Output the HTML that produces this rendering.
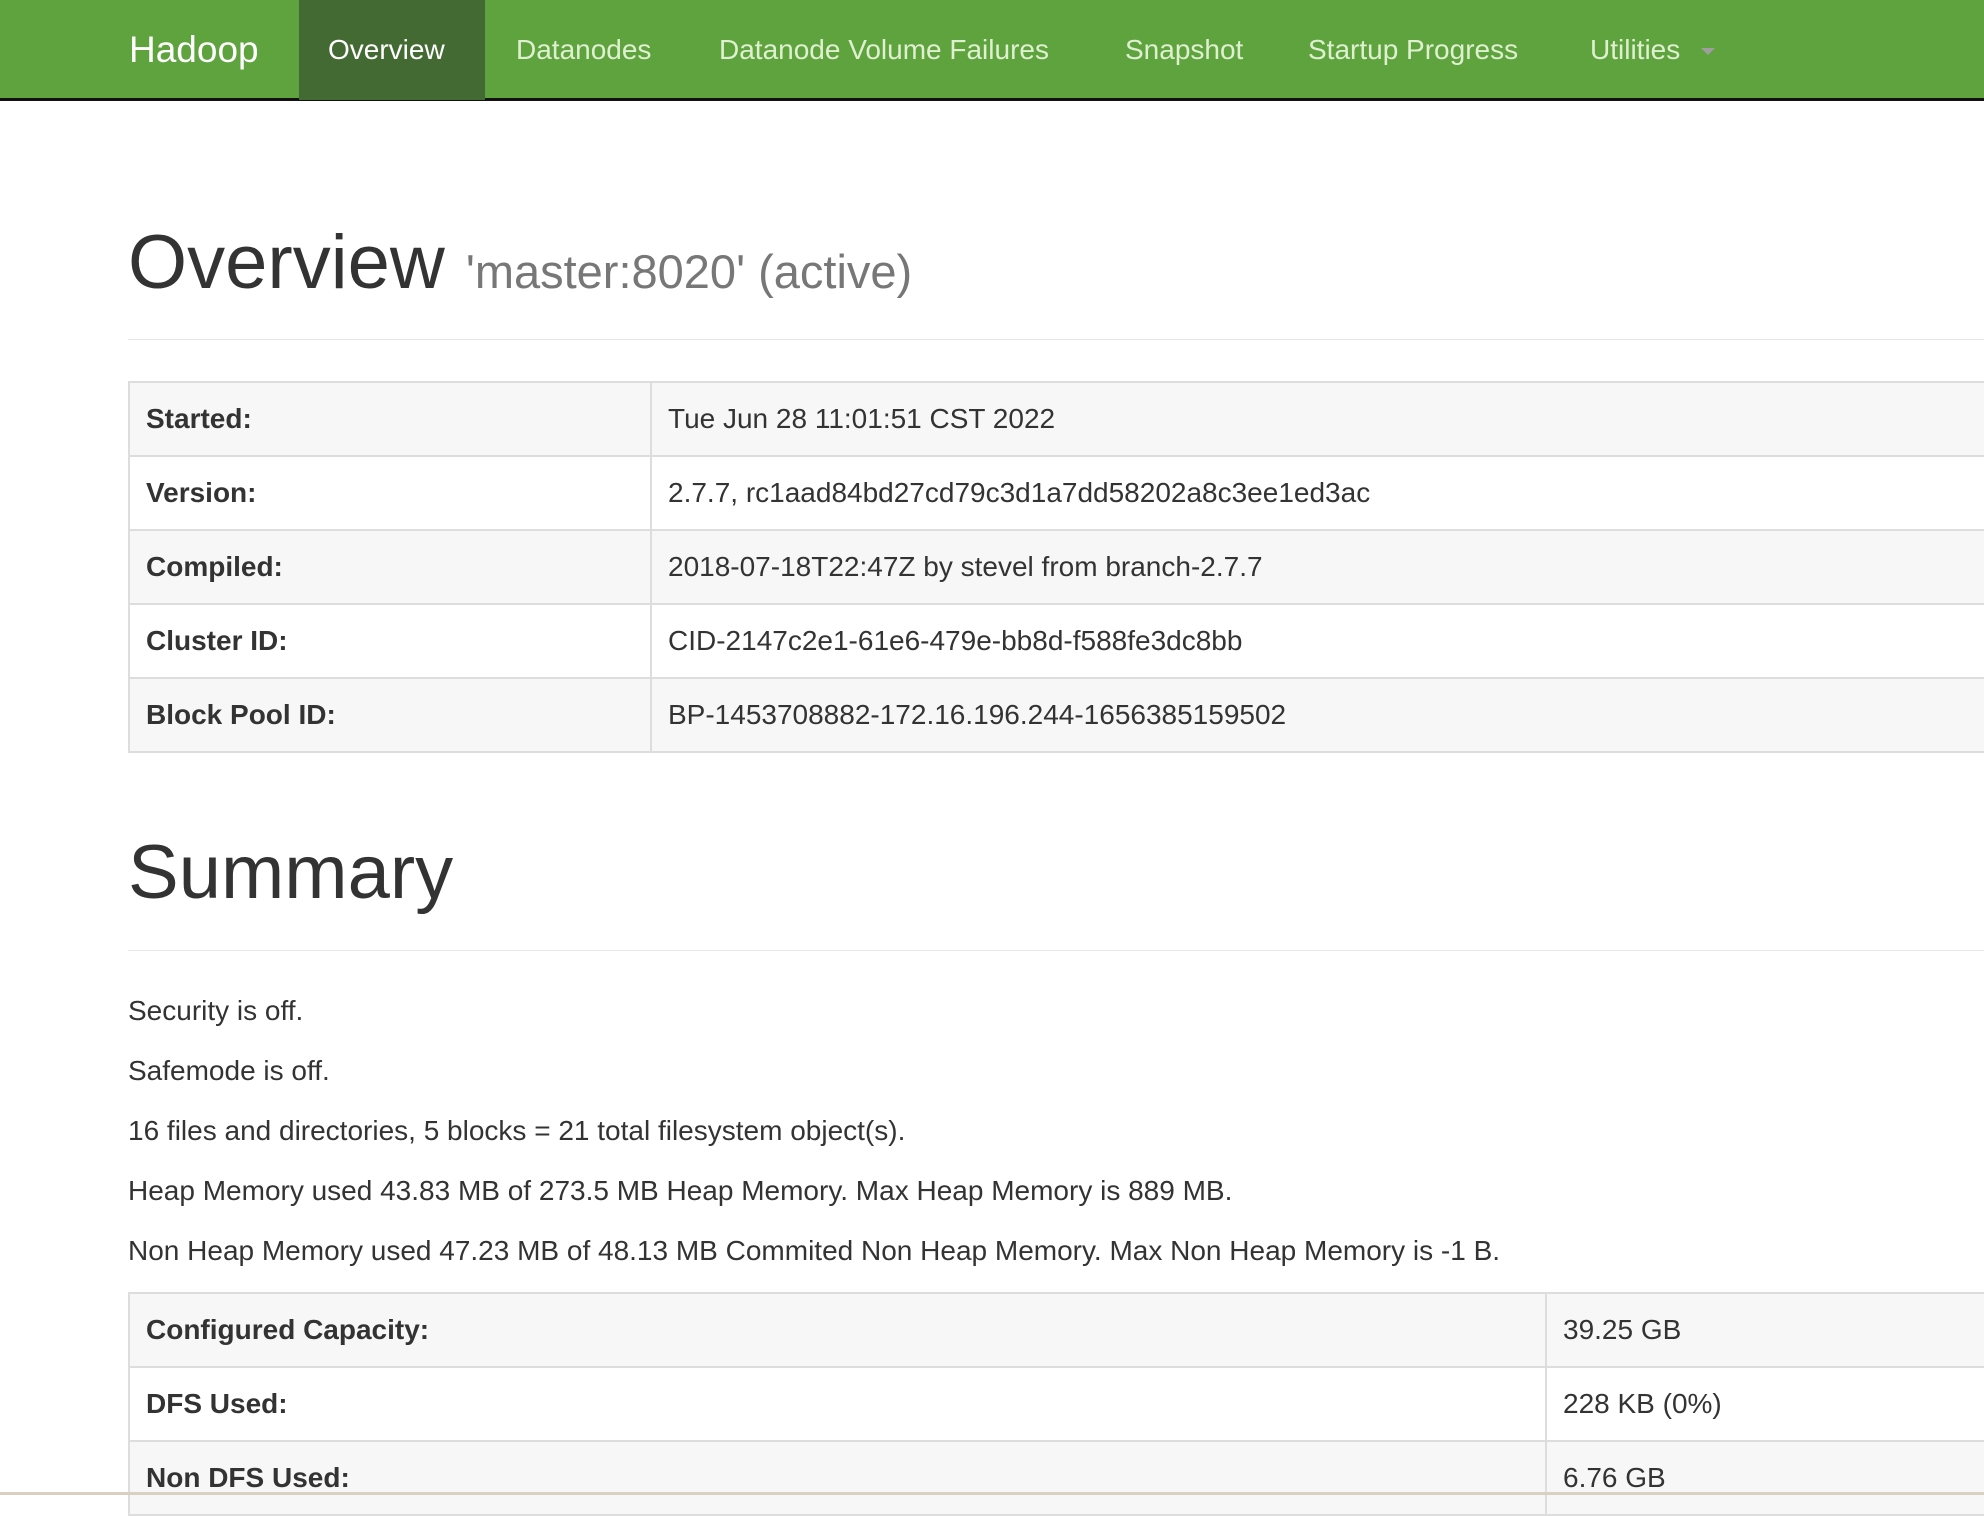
<!DOCTYPE html>
<html><head><meta charset="utf-8"><style>
*{margin:0;padding:0;box-sizing:border-box}
body{width:1984px;height:1495px;overflow:hidden;background:#fff;font-family:"Liberation Sans",sans-serif;color:#333;position:relative}
.nav{position:absolute;left:0;top:0;width:1984px;height:101px;background:#5fa33e;border-bottom:3px solid #111}
.nav span{position:absolute;top:0;line-height:100px;font-size:28px;color:#dff0d0;white-space:nowrap}
.nav .brand{font-size:37px;color:#fff}
.nav .act{background:#446a34;color:#fff;left:299px;width:186px;height:100px;padding-left:29px}
.caret{position:absolute;left:1701px;top:48px;width:0;height:0;border-left:7px solid transparent;border-right:7px solid transparent;border-top:7px solid #9e9e9e}
.abs{position:absolute;white-space:nowrap}
hr{position:absolute;left:128px;width:1856px;border:0;border-top:1px solid #e6e6e6}
table{position:absolute;left:128px;border-collapse:collapse;font-size:28px}
td{border:2px solid #ddd;height:74px;padding:0 16px;vertical-align:middle}
tr:nth-child(odd) td{background:#f7f7f7}
td.k{font-weight:bold}
p.l{position:absolute;left:128px;font-size:28px;white-space:nowrap}
.bot{position:absolute;left:0;top:1492px;width:1984px;height:3px;background:#d8d0c0}
</style></head><body>
<div class="nav">
<span class="brand" style="left:129px">Hadoop</span>
<span class="act">Overview</span>
<span style="left:516px">Datanodes</span>
<span style="left:719px">Datanode Volume Failures</span>
<span style="left:1125px">Snapshot</span>
<span style="left:1308px">Startup Progress</span>
<span style="left:1590px">Utilities</span>
<div class="caret"></div>
</div>
<div class="abs" style="left:128px;top:218px;font-size:76px;line-height:90px;color:#333">Overview <span style="font-size:47px;color:#777">'master:8020' (active)</span></div>
<hr style="top:339px">
<table style="top:381px;width:1900px">
<tr><td class="k" style="width:522px">Started:</td><td>Tue Jun 28 11:01:51 CST 2022</td></tr>
<tr><td class="k">Version:</td><td>2.7.7, rc1aad84bd27cd79c3d1a7dd58202a8c3ee1ed3ac</td></tr>
<tr><td class="k">Compiled:</td><td>2018-07-18T22:47Z by stevel from branch-2.7.7</td></tr>
<tr><td class="k">Cluster ID:</td><td>CID-2147c2e1-61e6-479e-bb8d-f588fe3dc8bb</td></tr>
<tr><td class="k">Block Pool ID:</td><td>BP-1453708882-172.16.196.244-1656385159502</td></tr>
</table>
<div class="abs" style="left:128px;top:828px;font-size:76px;line-height:90px">Summary</div>
<hr style="top:950px">
<p class="l" style="top:995px">Security is off.</p>
<p class="l" style="top:1055px">Safemode is off.</p>
<p class="l" style="top:1115px">16 files and directories, 5 blocks = 21 total filesystem object(s).</p>
<p class="l" style="top:1175px">Heap Memory used 43.83 MB of 273.5 MB Heap Memory. Max Heap Memory is 889 MB.</p>
<p class="l" style="top:1235px">Non Heap Memory used 47.23 MB of 48.13 MB Commited Non Heap Memory. Max Non Heap Memory is -1 B.</p>
<table style="top:1292px;width:1900px">
<tr><td class="k" style="width:1417px">Configured Capacity:</td><td>39.25 GB</td></tr>
<tr><td class="k">DFS Used:</td><td>228 KB (0%)</td></tr>
<tr><td class="k">Non DFS Used:</td><td>6.76 GB</td></tr>
</table>
<div class="bot"></div>
</body></html>
